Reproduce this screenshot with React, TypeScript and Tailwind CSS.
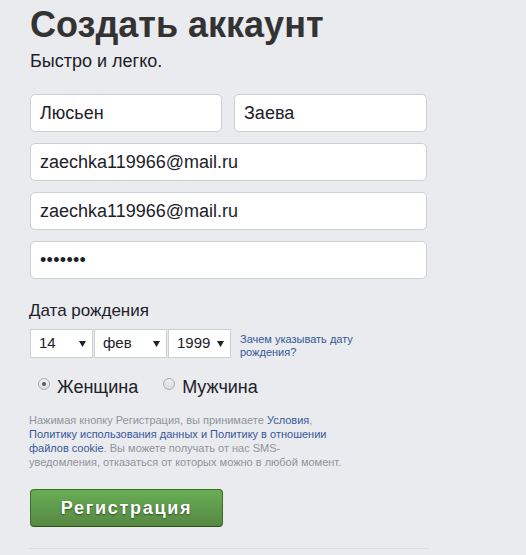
import React from 'react';

const Field: React.FC<{ value: string; className?: string }> = ({ value, className }) => (
    <div className={`h-[38px] bg-white border border-[#ccd0d5] rounded-[5px] flex items-center pl-[9px] text-[18px] text-[#1d2129] ${className ?? ''}`}>
        {value}
    </div>
);

const Select: React.FC<{ value: string; width: string }> = ({ value, width }) => (
    <div className={`h-[29px] ${width} bg-white border border-[#ccd0d5] flex items-center justify-between pl-[8px] pr-[6px] text-[15px] text-[#1d2129]`}>
        <span>{value}</span>
        <svg width="7" height="6" viewBox="0 0 7 6">
            <path d="M0 0 L7 0 L3.5 6 Z" fill="#1d2129" />
        </svg>
    </div>
);

const Radio: React.FC<{ label: string; checked?: boolean }> = ({ label, checked }) => (
    <label className="flex items-start gap-[7px]">
        <span className="mt-[2px] w-[12px] h-[12px] rounded-full border border-[#a8abaf] bg-gradient-to-b from-[#f0f0f0] to-[#dcdcdc] flex items-center justify-center">
            {checked && <span className="w-[4px] h-[4px] rounded-full bg-[#5a5a5a]" />}
        </span>
        <span className="text-[18px] leading-[22px] text-[#1d2129]">{label}</span>
    </label>
);

const App: React.FC = () => {
    return (
        <div className="min-h-screen bg-[#e9ebee] font-['Liberation_Sans',Arial,sans-serif]">
            <div className="pl-[30px] pt-[5px] w-[429px]">
                <h1 className="text-[36px] leading-[40px] font-bold text-[#333333]">Создать аккаунт</h1>
                <p className="mt-[4px] text-[18px] leading-[24px] text-[#1d2129]">Быстро и легко.</p>

                <div className="mt-[21px] flex flex-col gap-[11px]">
                    <div className="flex gap-[12px]">
                        <Field value="Люсьен" className="w-[192px]" />
                        <Field value="Заева" className="w-[193px]" />
                    </div>
                    <Field value="zaechka119966@mail.ru" className="w-[397px]" />
                    <Field value="zaechka119966@mail.ru" className="w-[397px]" />
                    <Field value="•••••••" className="w-[397px] tracking-[0.3px]" />
                </div>

                <div className="mt-[22px] text-[17px] leading-[20px] text-[#1d2129] -ml-px">Дата рождения</div>
                <div className="mt-[8px] flex items-start">
                    <div className="flex gap-px">
                        <Select value="14" width="w-[63px]" />
                        <Select value="фев" width="w-[73px]" />
                        <Select value="1999" width="w-[63px]" />
                    </div>
                    <a className="ml-[9px] mt-[4px] text-[11px] leading-[13px] text-[#365899]">
                        Зачем указывать дату
                        <br />
                        рождения?
                    </a>
                </div>

                <div className="mt-[17px] ml-[8px] flex gap-[25px]">
                    <Radio label="Женщина" checked />
                    <Radio label="Мужчина" />
                </div>

                <p className="mt-[15px] -ml-px text-[11px] leading-[14px] text-[#90949c]">
                    Нажимая кнопку Регистрация, вы принимаете <a className="text-[#385898]">Условия</a>,
                    <br />
                    <a className="text-[#385898]">Политику использования данных и Политику в отношении</a>
                    <br />
                    <a className="text-[#385898]">файлов cookie</a>. Вы можете получать от нас SMS-
                    <br />
                    уведомления, отказаться от которых можно в любой момент.
                </p>

                <button className="mt-[20px] w-[193px] h-[38px] rounded-[4px] border border-[#3b6e22] border-b-[#2c5115] bg-gradient-to-b from-[#67ae55] to-[#578843] text-white text-[18px] font-bold tracking-[1.7px] [text-shadow:0_1px_2px_rgba(0,0,0,0.5)]">
                    Регистрация
                </button>

                <div className="mt-[21px] -ml-px h-px w-[400px] bg-[#dadde1]" />
            </div>
        </div>
    );
};

export default App;
